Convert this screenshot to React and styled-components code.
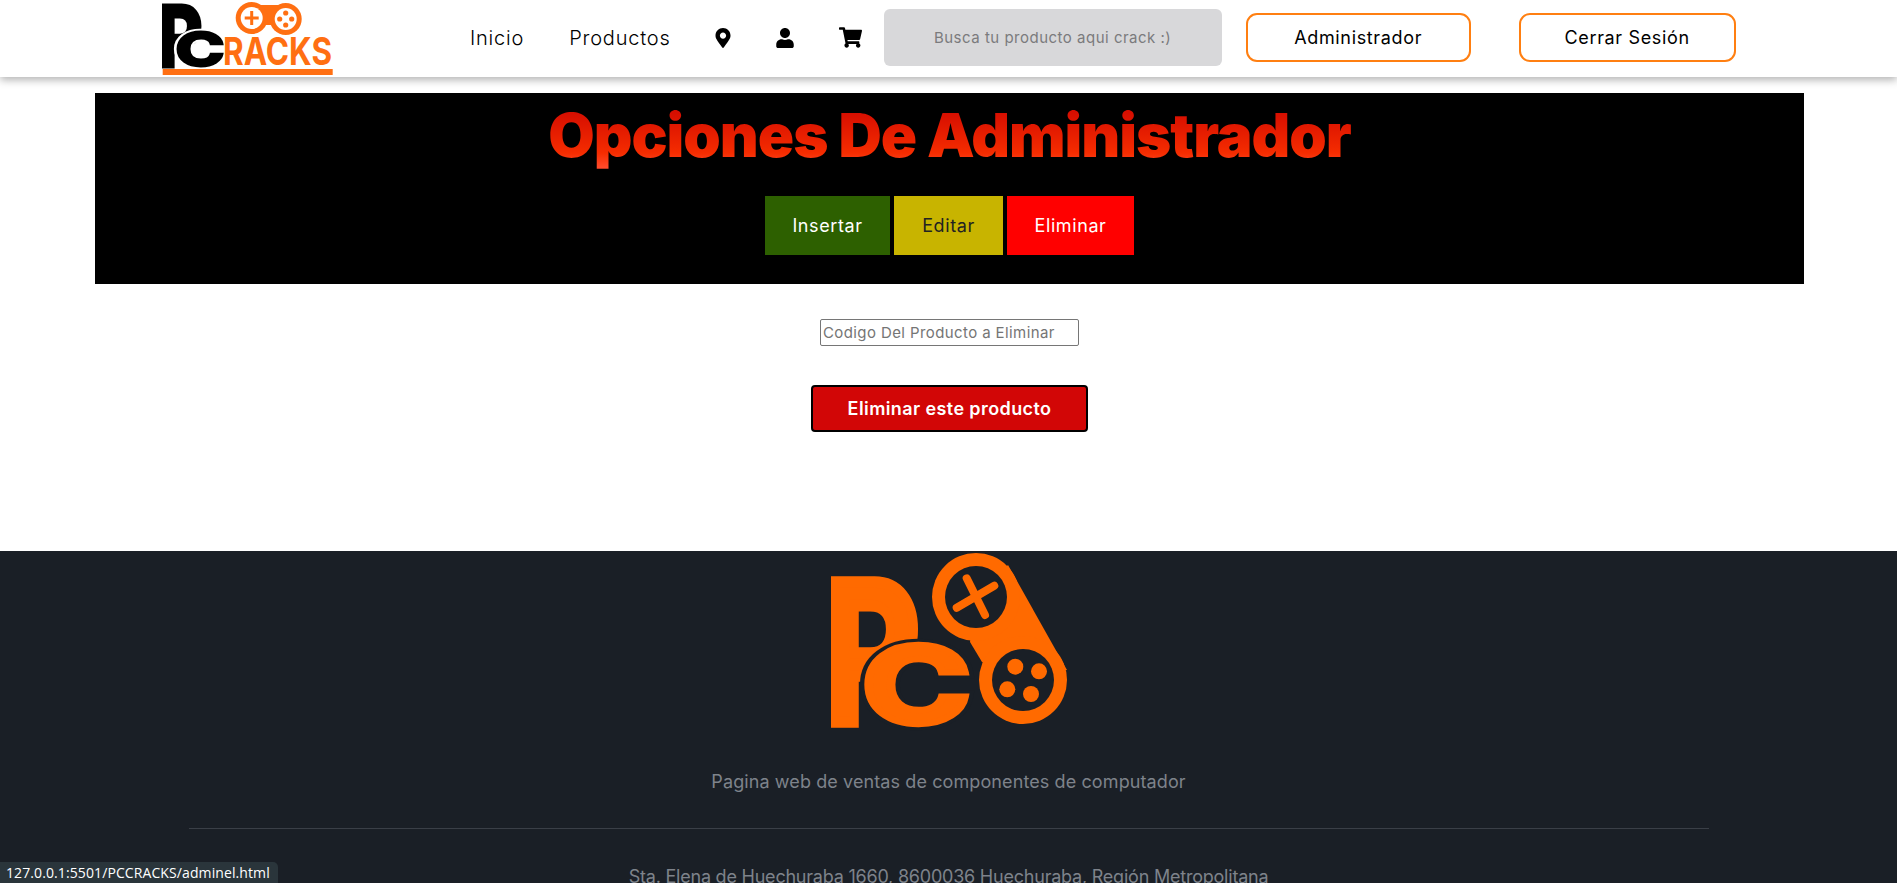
import React from "react";
import styled, { createGlobalStyle } from "styled-components";
import { FaMapMarkerAlt, FaUser, FaShoppingCart } from "react-icons/fa";

const GlobalStyle = createGlobalStyle`
  html, body {
    margin: 0;
    height: 100%;
    overflow: hidden;
    background: #fff;
  }
  * {
    box-sizing: border-box;
    font-family: "Inter", "Liberation Sans", sans-serif;
  }
`;

const Page = styled.div`
  position: relative;
  height: 883px;
  overflow: hidden;
`;

const Header = styled.header`
  position: relative;
  z-index: 2;
  height: 77px;
  display: flex;
  align-items: center;
  padding: 0 0 2px 162px;
  background: #fff;
  box-shadow: 0 3px 8px rgba(0, 0, 0, 0.3);
`;

const BrandLogo = styled.svg`
  align-self: flex-start;
  width: 171px;
  height: 77px;
  flex: none;
  margin-right: 137px;
`;

const NavGroup = styled.nav`
  display: flex;
  align-items: center;
  gap: 45px;
`;

const NavLink = styled.a`
  font-size: 20px;
  font-weight: 300;
  letter-spacing: 0.8px;
  color: #000;
`;

const NavIcon = styled.span`
  display: flex;
  margin-left: ${(p) => p.$shift}px;
  font-size: ${(p) => p.$size}px;
  color: #000;
`;

const Search = styled.input`
  width: 338px;
  height: 57px;
  margin-left: 22px;
  border: none;
  border-radius: 6px;
  background: #d8d8da;
  text-align: center;
  font-size: 15px;
  letter-spacing: 0.5px;
  &::placeholder {
    color: #7b7b7d;
  }
`;

const OutlineButton = styled.button`
  width: ${(p) => p.$width}px;
  height: 49px;
  margin-left: ${(p) => p.$gap}px;
  border: 2px solid #ff7f11;
  border-radius: 11px;
  background: #fff;
  color: #000;
  font-size: 18px;
  font-weight: 400;
  letter-spacing: 0.65px;
`;

const Banner = styled.section`
  height: 191px;
  margin: 16px 93px 0 95px;
  padding-top: 6px;
  display: flex;
  flex-direction: column;
  align-items: center;
  background: #000;
`;

const Title = styled.h1`
  margin: 0;
  font-size: 60px;
  line-height: 72px;
  font-weight: 900;
  letter-spacing: -1px;
  background: linear-gradient(180deg, #d40c00 15%, #f52c00 75%, #ff4a2a 95%);
  -webkit-background-clip: text;
  background-clip: text;
  color: transparent;
`;

const TabRow = styled.div`
  display: flex;
  gap: 4px;
  margin-top: 25px;
`;

const Tab = styled.button`
  width: ${(p) => p.$width}px;
  height: 59px;
  border: none;
  background: ${(p) => p.$bg};
  color: ${(p) => p.$fg};
  font-size: 18px;
  letter-spacing: 0.6px;
`;

const DeleteForm = styled.form`
  height: 267px;
  padding: 35px 0 0 2px;
  display: flex;
  flex-direction: column;
  align-items: center;
`;

const CodeInput = styled.input`
  width: 259px;
  height: 27px;
  padding: 1px 2px;
  border: 1px solid #767676;
  border-radius: 2px;
  font-size: 15px;
  letter-spacing: 0.4px;
`;

const DeleteButton = styled.button`
  width: 277px;
  height: 47px;
  margin-top: 39px;
  border: 2px solid #000;
  border-radius: 4px;
  background: #d20606;
  color: #fff;
  font-size: 18px;
  font-weight: 600;
  letter-spacing: 0.4px;
`;

const Footer = styled.footer`
  height: 332px;
  padding-top: 1px;
  display: flex;
  flex-direction: column;
  align-items: center;
  background: #1a1f26;
`;

const FooterLogo = styled.svg`
  width: 236px;
  height: 179px;
  flex: none;
`;

const Tagline = styled.p`
  margin: 39px 0 0;
  font-size: 18px;
  line-height: 24px;
  letter-spacing: 0.1px;
  color: #7e838b;
`;

const Divider = styled.hr`
  width: 1520px;
  margin: 34px 0 0;
  border: none;
  border-top: 1px solid #3a3f47;
`;

const Address = styled.p`
  margin: 36px 0 0;
  font-size: 18px;
  line-height: 24px;
  letter-spacing: -0.22px;
  color: #7e838b;
`;

const StatusTip = styled.div`
  position: absolute;
  left: 0;
  bottom: 0;
  width: 278px;
  height: 21px;
  padding-left: 6px;
  border-top-right-radius: 5px;
  background: #2a353b;
  color: #fff;
  font-family: "Open Sans", "Liberation Sans", sans-serif;
  font-size: 14px;
  line-height: 21px;
  letter-spacing: 0.1px;
  white-space: nowrap;
`;

const heavy = { fontFamily: "DejaVu Sans", fontWeight: 700, fontSize: 100 };

const HeaderMark = () => (
  <BrandLogo viewBox="0 0 171 77">
    <text
      {...heavy}
      fill="#000"
      stroke="#000"
      strokeWidth="6"
      transform="translate(-4 65.5) scale(0.68 0.82)"
    >
      P
    </text>
    <text
      {...heavy}
      fill="#000"
      stroke="#fff"
      strokeWidth="14"
      paintOrder="stroke"
      transform="translate(13.5 66) scale(0.66 0.46)"
    >
      C
    </text>
    <text
      {...heavy}
      fill="#000"
      stroke="#000"
      strokeWidth="6"
      transform="translate(13.5 66) scale(0.66 0.46)"
    >
      C
    </text>
    <text
      x="61"
      y="65"
      fontFamily="Liberation Sans"
      fontWeight="700"
      fontSize="38"
      fill="#ff6f12"
      textLength="109"
      lengthAdjust="spacingAndGlyphs"
    >
      RACKS
    </text>
    <rect x="0.7" y="69" width="170" height="6" fill="#ff6f12" />
    <rect x="90" y="5" width="34" height="20" fill="#ff6f12" />
    <circle cx="89.7" cy="18" r="16" fill="#ff6f12" />
    <circle cx="123.7" cy="19" r="16" fill="#ff6f12" />
    <circle cx="89.7" cy="18" r="11" fill="#fff" />
    <circle cx="123.7" cy="19" r="11" fill="#fff" />
    <path d="M89.7 11v14M82.7 18h14" stroke="#ff6f12" strokeWidth="3" />
    <circle cx="123.7" cy="13" r="2.6" fill="#ff6f12" />
    <circle cx="123.7" cy="25" r="2.6" fill="#ff6f12" />
    <circle cx="117.7" cy="19" r="2.6" fill="#ff6f12" />
    <circle cx="129.7" cy="19" r="2.6" fill="#ff6f12" />
  </BrandLogo>
);

const FooterMark = () => (
  <FooterLogo viewBox="0 0 236 179">
    <text
      {...heavy}
      fill="#ff6a00"
      stroke="#ff6a00"
      strokeWidth="6"
      transform="translate(-9 170) scale(1.5 1.92)"
    >
      P
    </text>
    <text
      {...heavy}
      fill="#ff6a00"
      stroke="#1a1f26"
      strokeWidth="12"
      paintOrder="stroke"
      transform="translate(31 171) scale(1.47 1.06)"
    >
      C
    </text>
    <text
      {...heavy}
      fill="#ff6a00"
      stroke="#ff6a00"
      strokeWidth="6"
      transform="translate(31 171) scale(1.47 1.06)"
    >
      C
    </text>
    <polygon points="177,13 236,118 190,128 151,110 139,90 145,45" fill="#ff6a00" />
    <circle cx="145" cy="45" r="44" fill="#ff6a00" />
    <circle cx="192" cy="128" r="44" fill="#ff6a00" />
    <circle cx="145" cy="45" r="31" fill="#1a1f26" />
    <circle cx="192" cy="128" r="31" fill="#1a1f26" />
    <path
      d="M135.7 26.3L154 63M125.7 55.7L163.3 33.7"
      stroke="#ff6a00"
      strokeWidth="8"
      strokeLinecap="round"
    />
    <circle cx="184.3" cy="114.7" r="8" fill="#ff6a00" />
    <circle cx="208" cy="119.3" r="8" fill="#ff6a00" />
    <circle cx="176.3" cy="137.3" r="8" fill="#ff6a00" />
    <circle cx="200" cy="142" r="8" fill="#ff6a00" />
  </FooterLogo>
);

const App = () => {
  return (
    <Page>
      <GlobalStyle />
      <Header>
        <HeaderMark />
        <NavGroup>
          <NavLink>Inicio</NavLink>
          <NavLink>Productos</NavLink>
          <NavIcon $size={20} $shift={-3}><FaMapMarkerAlt /></NavIcon>
          <NavIcon $size={20} $shift={-3}><FaUser /></NavIcon>
          <NavIcon $size={23} $shift={-1}><FaShoppingCart /></NavIcon>
        </NavGroup>
        <Search placeholder="Busca tu producto aqui crack :)" />
        <OutlineButton $width={225} $gap={24}>Administrador</OutlineButton>
        <OutlineButton $width={217} $gap={48}>Cerrar Sesión</OutlineButton>
      </Header>
      <Banner>
        <Title>Opciones De Administrador</Title>
        <TabRow>
          <Tab $width={125} $bg="#2d6000" $fg="#fff">Insertar</Tab>
          <Tab $width={109} $bg="#c8b400" $fg="#222">Editar</Tab>
          <Tab $width={127} $bg="#ff0000" $fg="#fff">Eliminar</Tab>
        </TabRow>
      </Banner>
      <DeleteForm>
        <CodeInput placeholder="Codigo Del Producto a Eliminar" />
        <DeleteButton type="button">Eliminar este producto</DeleteButton>
      </DeleteForm>
      <Footer>
        <FooterMark />
        <Tagline>Pagina web de ventas de componentes de computador</Tagline>
        <Divider />
        <Address>Sta. Elena de Huechuraba 1660, 8600036 Huechuraba, Región Metropolitana</Address>
      </Footer>
      <StatusTip>127.0.0.1:5501/PCCRACKS/adminel.html</StatusTip>
    </Page>
  );
};

export default App;
